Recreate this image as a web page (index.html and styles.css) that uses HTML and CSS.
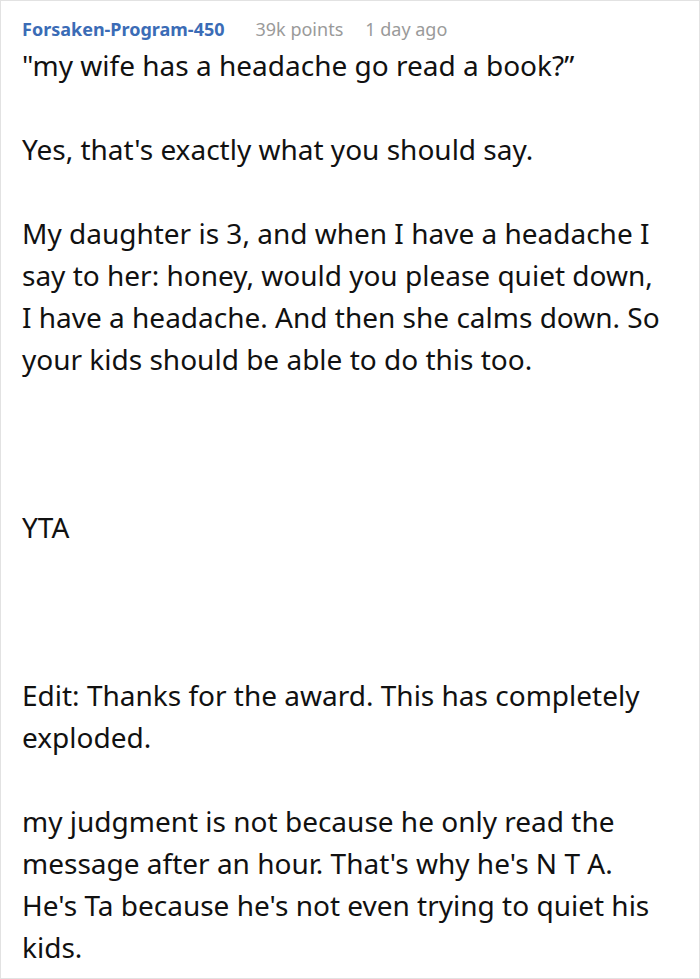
FILE: index.html
```html
<!DOCTYPE html>
<html lang="en">
<head>
<meta charset="utf-8">
<title>Comment</title>
<link rel="stylesheet" href="styles.css">
</head>
<body>
<article class="comment">
  <header class="meta">
    <span class="author">Forsaken-Program-450</span>
    <span class="points">39k points</span>
    <span class="time">1 day ago</span>
  </header>
  <div class="body">
    <p>"my wife has a headache go read a book?”</p>
    <p>Yes, that's exactly what you should say.</p>
    <p>My daughter is 3, and when I have a headache I say to her: honey, would you please quiet down, I have a headache. And then she calms down. So your kids should be able to do this too.</p>
    <p class="spacer">&nbsp;</p>
    <p>YTA</p>
    <p class="spacer">&nbsp;</p>
    <p>Edit: Thanks for the award. This has completely exploded.</p>
    <p>my judgment is not because he only read the message after an hour. That's why he's N T A. He's Ta because he's not even trying to quiet his kids.</p>
  </div>
</article>
</body>
</html>
```

FILE: styles.css
```css
* { box-sizing: border-box; }
html, body { margin: 0; padding: 0; background: #ffffff; }
.comment {
  width: 700px;
  height: 979px;
  border: 1px solid #e2e2e2;
  padding: 17px 36px 0 21px;
  font-family: "Noto Sans", "DejaVu Sans", sans-serif;
  overflow: hidden;
}
.meta {
  display: flex;
  align-items: baseline;
  font-size: 18px;
  line-height: 22px;
  white-space: nowrap;
}
.author { color: #3b6cb6; font-weight: 700; }
.points { color: #9a9a9a; margin-left: 31px; }
.time { color: #9a9a9a; margin-left: 22px; }
.body {
  margin-top: 4px;
  font-size: 28px;
  line-height: 42px;
  color: #111111;
}
.body p { margin: 0 0 42px 0; }
```
